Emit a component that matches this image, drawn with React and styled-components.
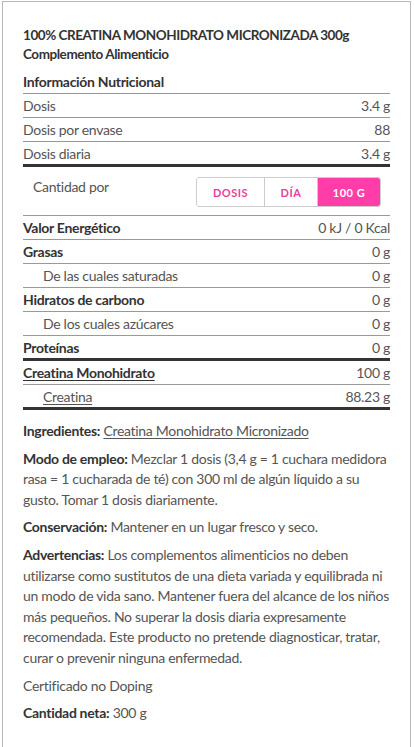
import React from 'react'
import styled, { createGlobalStyle } from 'styled-components'

const Global = createGlobalStyle`
    body{
        margin: 0;
        background: #fff;
        font-family: Lato, "Open Sans", sans-serif;
        color: #333;
    }
`

const rows = [
    { label: 'Valor Energético', value: '0 kJ / 0 Kcal', bold: true },
    { label: 'Grasas', value: '0 g', bold: true },
    { label: 'De las cuales saturadas', value: '0 g', sub: true },
    { label: 'Hidratos de carbono', value: '0 g', bold: true },
    { label: 'De los cuales azúcares', value: '0 g', sub: true },
    { label: 'Proteínas', value: '0 g', bold: true, thick: true },
    { label: 'Creatina Monohidrato', value: '100 g', bold: true, link: true },
    { label: 'Creatina', value: '88.23 g', sub: true, link: true, thick: true },
]

const App = () => (
    <Frame>
        <Global />
        <Title>
            100% CREATINA MONOHIDRATO MICRONIZADA 300g<br />
            Complemento Alimenticio
        </Title>

        <Heading>Información Nutricional</Heading>
        <Row>
            <Label>Dosis</Label>
            <Value>3.4 g</Value>
        </Row>
        <Row>
            <Label>Dosis por envase</Label>
            <Value>88</Value>
        </Row>
        <Row thick>
            <Label>Dosis diaria</Label>
            <Value>3.4 g</Value>
        </Row>

        <Amount>
            <span>Cantidad por</span>
            <Toggle>
                <ToggleBtn w={67}>DOSIS</ToggleBtn>
                <ToggleBtn w={53}>DÍA</ToggleBtn>
                <ToggleBtn w={63} active>100 G</ToggleBtn>
            </Toggle>
        </Amount>

        {rows.map(r => (
            <Row key={r.label} thick={r.thick}>
                <Label bold={r.bold} sub={r.sub} link={r.link}>{r.label}</Label>
                <Value>{r.value}</Value>
            </Row>
        ))}

        <Text>
            <p><b>Ingredientes:</b> <u>Creatina Monohidrato Micronizado</u></p>
            <p><b>Modo de empleo:</b> Mezclar 1 dosis (3,4 g = 1 cuchara medidora rasa = 1 cucharada de té) con 300 ml de algún líquido a su gusto. Tomar 1 dosis diariamente.</p>
            <p><b>Conservación:</b> Mantener en un lugar fresco y seco.</p>
            <p><b>Advertencias:</b> Los complementos alimenticios no deben utilizarse como sustitutos de una dieta variada y equilibrada ni un modo de vida sano. Mantener fuera del alcance de los niños más pequeños. No superar la dosis diaria expresamente recomendada. Este producto no pretende diagnosticar, tratar, curar o prevenir ninguna enfermedad.</p>
            <p>Certificado no Doping</p>
            <p><b>Cantidad neta:</b> 300 g</p>
        </Text>
    </Frame>
)

export default App


const Frame = styled.div`
    margin: 1px 0 0 2px;
    min-height: 746px;
    box-sizing: border-box;
    width: 409px;
    padding: 24px 20px 20px 20px;
    border: 1px solid #b8b8b8;
    border-bottom: none;
    letter-spacing: -0.3px;
`

const Title = styled.h1`
    margin: 0;
    font-size: 13.5px;
    line-height: 19px;
    font-weight: 700;
    color: #333;
    letter-spacing: -0.45px;
`

const Heading = styled.h2`
    margin: 7px 0 0;
    font-size: 14px;
    line-height: 22px;
    font-weight: 700;
    color: #333;
    border-bottom: 1px solid #999;
`

const Row = styled.div`
    display: flex;
    justify-content: space-between;
    align-items: center;
    height: ${p => p.thick ? '22px' : '23px'};
    font-size: 14px;
    color: #444;
    border-bottom: ${p => p.thick ? '3px solid #333' : '1px solid #999'};
`

const Label = styled.span`
    font-weight: ${p => p.bold ? 700 : 400};
    color: ${p => p.bold ? '#333' : '#555'};
    padding-left: ${p => p.sub ? '20px' : '0'};
    text-decoration: ${p => p.link ? 'underline' : 'none'};
    text-underline-offset: 2px;
`

const Value = styled.span`
    color: #555;
`

const Amount = styled.div`
    display: flex;
    justify-content: space-between;
    align-items: flex-start;
    height: 49px;
    box-sizing: border-box;
    padding: 10px 9px 0 10px;
    font-size: 14px;
    color: #555;
    border-bottom: 1px solid #999;
    span{
        padding-top: 1px;
    }
`

const Toggle = styled.div`
    display: flex;
    height: 28px;
    border: 1px solid #ccc;
    border-radius: 3px;
    overflow: hidden;
`

const ToggleBtn = styled.button`
    width: ${p => p.w}px;
    padding: 0;
    border: none;
    border-left: 1px solid #ccc;
    &:first-child{
        border-left: none;
    }
    background: ${p => p.active ? '#ff3da8' : '#fff'};
    color: ${p => p.active ? '#fff' : '#e8409f'};
    font-family: Lato, sans-serif;
    font-size: 11px;
    font-weight: 700;
    letter-spacing: 0.5px;
    white-space: nowrap;
`

const Text = styled.div`
    margin-top: 11px;
    font-size: 14px;
    line-height: 20.6px;
    color: #555;
    p{
        margin: 0 0 7px;
    }
    b{
        color: #333;
    }
    u{
        text-underline-offset: 2px;
    }
`
